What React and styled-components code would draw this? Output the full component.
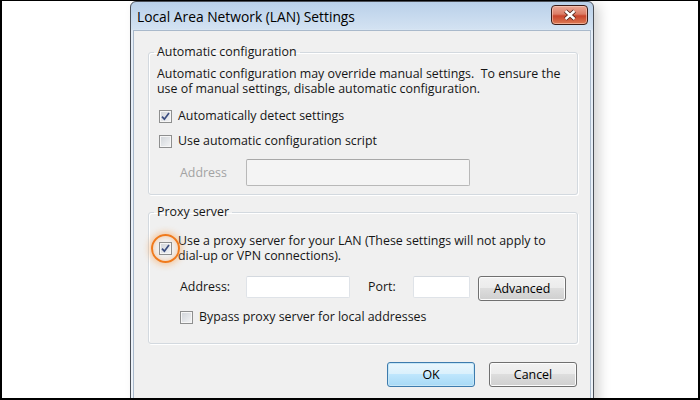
import React from "react";
import styled, { createGlobalStyle } from "styled-components";

const GlobalStyle = createGlobalStyle`
  html, body {
    margin: 0;
    padding: 0;
    background: #fff;
  }
  body {
    font-family: "Open Sans", "Liberation Sans", sans-serif;
    color: #161616;
  }
`;

const Frame = styled.div`
  width: 700px;
  height: 400px;
  box-sizing: border-box;
  border: 2px solid #000;
  border-top-width: 1px;
  background: #fff;
  overflow: hidden;
  padding-left: 128px;
`;

const Window = styled.div`
  width: 464px;
  height: 420px;
  box-sizing: border-box;
  border: 1px solid #4a4f57;
  border-radius: 6px 6px 0 0;
  padding: 0 2px 3px;
  background: linear-gradient(#b9d0e9, #d3e2f2 27px, #e4edf7 29px, #eef3f9);
  box-shadow: 6px 3px 12px rgba(0, 0, 0, 0.16);
  display: flex;
  flex-direction: column;
`;

const TitleBar = styled.div`
  height: 28px;
  display: flex;
  align-items: flex-start;
  justify-content: space-between;
  padding: 0 3px 0 4px;
`;

const Title = styled.div`
  font-size: 13.8px;
  line-height: 30px;
  color: #000;
`;

const CloseButton = styled.div`
  margin-top: 3px;
  width: 37px;
  height: 20px;
  box-sizing: border-box;
  border: 1px solid #3b1c17;
  border-radius: 4px;
  background: linear-gradient(#eba896, #dc7d66 45%, #c9452c 55%, #dc7a55);
  box-shadow: inset 0 0 0 1px rgba(255, 215, 200, 0.55);
  display: flex;
  align-items: center;
  justify-content: center;
`;

const Content = styled.div`
  flex: 1;
  background: #f0f0f0;
  border: 1px solid #a9b9cb;
  padding: 13px 12px 0 14px;
  display: flex;
  flex-direction: column;
`;

const Group = styled.fieldset`
  margin: ${(p) => p.$mt || 0}px 0 0;
  padding: 0 8px ${(p) => p.$pb}px 8px;
  border: 1px solid #d3d9df;
  border-radius: 3px;
  box-shadow: inset 1px 1px 0 #fff, 1px 1px 0 #fff;
  display: flex;
  flex-direction: column;
  min-width: 0;
`;

const Legend = styled.legend`
  font-size: 12.4px;
  line-height: 16px;
  padding: 0 3px;
  margin-left: -3px;
`;

const Text = styled.div`
  font-size: 12.4px;
  line-height: 15px;
  white-space: nowrap;
  margin-top: ${(p) => p.$mt || 0}px;
`;

const Row = styled.div`
  display: flex;
  align-items: ${(p) => p.$align || "center"};
  margin-top: ${(p) => p.$mt || 0}px;
  padding-left: ${(p) => p.$indent || 0}px;
  font-size: 12.4px;
  line-height: 16px;
  white-space: nowrap;
`;

const Box = styled.span`
  position: relative;
  flex: none;
  width: 13px;
  height: 13px;
  box-sizing: border-box;
  margin: 0 6px 0 2px;
  border: 1px solid #8e8f8f;
  background: linear-gradient(135deg, #cfd3d8, #f4f5f6);
  box-shadow: inset 0 0 0 1px #f6f6f6;
  display: flex;
  align-items: center;
  justify-content: center;

  ${(p) =>
    p.$ring &&
    `
    &::after {
      content: "";
      position: absolute;
      left: 50%;
      top: 50%;
      width: 29px;
      height: 29px;
      margin: -14.5px 0 0 -14.5px;
      box-sizing: border-box;
      border: 2px solid #f07a1c;
      border-radius: 50%;
      box-shadow: 0 0 6px 2px rgba(250, 150, 60, 0.45),
        inset 0 0 4px 1px rgba(250, 150, 60, 0.35);
    }
  `}
`;

const Label = styled.span`
  color: ${(p) => (p.$disabled ? "#a3a3a3" : "inherit")};
  width: ${(p) => (p.$w ? `${p.$w}px` : "auto")};
  margin-left: ${(p) => p.$ml || 0}px;
  line-height: ${(p) => p.$lh || 16}px;
  flex: none;
`;

const Input = styled.div`
  flex: none;
  width: ${(p) => p.$w}px;
  height: ${(p) => p.$h}px;
  box-sizing: border-box;
  border: 1px solid ${(p) => (p.$disabled ? "#b8b8b8" : "#dfe3e8")};
  border-top-color: ${(p) => (p.$disabled ? "#a8a8a8" : "#d4d9df")};
  border-radius: 2px;
  background: ${(p) => (p.$disabled ? "#f4f4f4" : "#fff")};
  margin-left: ${(p) => p.$ml || 0}px;
`;

const Button = styled.div`
  flex: none;
  width: ${(p) => p.$w}px;
  height: ${(p) => p.$h}px;
  box-sizing: border-box;
  margin-left: ${(p) => p.$ml || 0}px;
  border: 1px solid ${(p) => (p.$default ? "#3d7bad" : "#707070")};
  border-radius: 3px;
  background: ${(p) =>
    p.$default
      ? "linear-gradient(#eaf6fd, #d9f0fc 50%, #bee6fd 50%, #a7d9f5)"
      : "linear-gradient(#f2f2f2, #ebebeb 50%, #dddddd 50%, #cfcfcf)"};
  box-shadow: inset 0 0 0 1px ${(p) => (p.$default ? "#c5e6f7" : "#fcfcfc")};
  font-size: 12.4px;
  display: flex;
  align-items: center;
  justify-content: center;
  color: #000;
`;

const ButtonRow = styled.div`
  display: flex;
  justify-content: flex-end;
  margin-top: 18px;
  padding-right: 1px;
`;

function Check({ checked, ring }) {
  return (
    <Box $ring={ring}>
      {checked && (
        <svg width="9" height="9" viewBox="0 0 9 9">
          <path
            d="M1 4.6 L3.4 7.2 L8 1"
            fill="none"
            stroke="#3a4d80"
            strokeWidth="1.7"
          />
        </svg>
      )}
    </Box>
  );
}

export default function App() {
  return (
    <>
      <GlobalStyle />
      <Frame>
        <Window>
          <TitleBar>
            <Title>Local Area Network (LAN) Settings</Title>
            <CloseButton>
              <svg width="14" height="12" viewBox="0 0 14 12">
                <path d="M2.5 2 L11.5 10 M11.5 2 L2.5 10" stroke="#4a2218" strokeWidth="4.2" />
                <path d="M2.5 2 L11.5 10 M11.5 2 L2.5 10" stroke="#fff" strokeWidth="2.4" />
              </svg>
            </CloseButton>
          </TitleBar>
          <Content>
            <Group $pb={8}>
              <Legend>Automatic configuration</Legend>
              <Text $mt={6}>
                Automatic configuration may override manual settings.&nbsp; To ensure the
                <br />
                use of manual settings, disable automatic configuration.
              </Text>
              <Row $mt={12}>
                <Check checked />
                <Label>Automatically detect settings</Label>
              </Row>
              <Row $mt={9}>
                <Check />
                <Label>Use automatic configuration script</Label>
              </Row>
              <Row $mt={10} $indent={23}>
                <Label $disabled $w={66}>Address</Label>
                <Input $disabled $w={224} $h={27} />
              </Row>
            </Group>

            <Group $mt={9} $pb={18}>
              <Legend>Proxy server</Legend>
              <Row $mt={13}>
                <Check checked ring />
                <Text>
                  Use a proxy server for your LAN (These settings will not apply to
                  <br />
                  dial-up or VPN connections).
                </Text>
              </Row>
              <Row $mt={13} $indent={23} $align="flex-start">
                <Label $w={66} $lh={22}>Address:</Label>
                <Input $w={104} $h={22} />
                <Label $w={45} $lh={22} $ml={18}>Port:</Label>
                <Input $w={57} $h={22} />
                <Button $w={88} $h={25} $ml={8}>Advanced</Button>
              </Row>
              <Row $mt={8} $indent={21}>
                <Check />
                <Label>Bypass proxy server for local addresses</Label>
              </Row>
            </Group>

            <ButtonRow>
              <Button $default $w={88} $h={25}>OK</Button>
              <Button $w={88} $h={25} $ml={14}>Cancel</Button>
            </ButtonRow>
          </Content>
        </Window>
      </Frame>
    </>
  );
}
